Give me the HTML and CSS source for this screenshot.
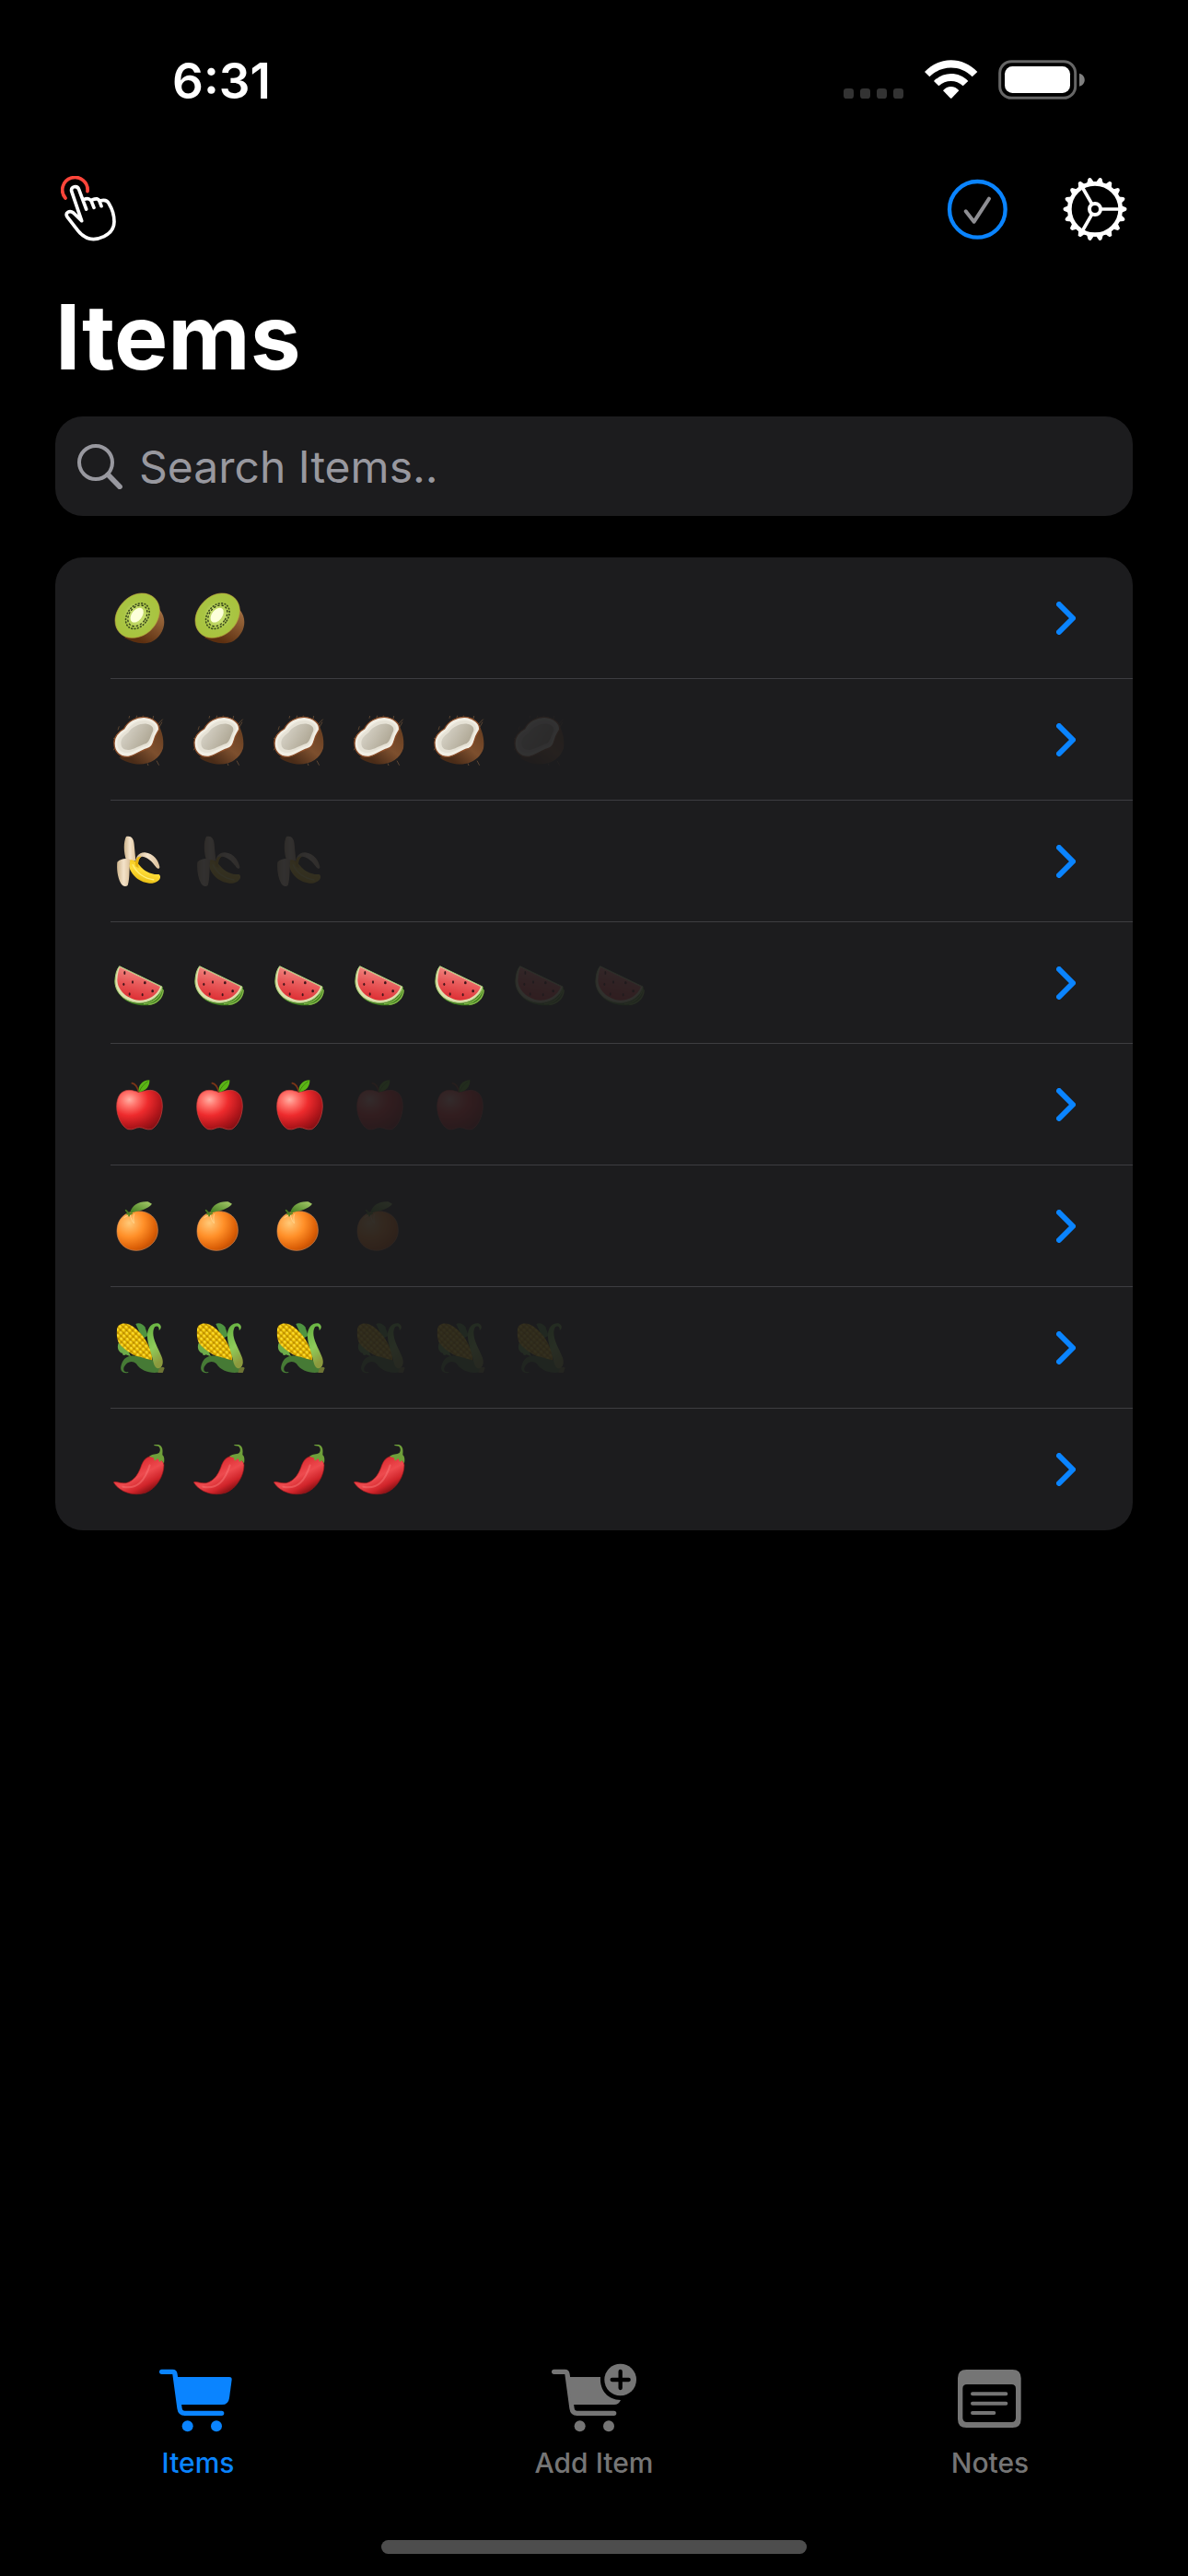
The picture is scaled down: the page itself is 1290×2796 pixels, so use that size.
FILE: index.html
```html
<!DOCTYPE html>
<html lang="en">
<head>
<meta charset="utf-8">
<meta name="viewport" content="width=device-width, initial-scale=1">
<title>Items</title>
<link rel="stylesheet" href="styles.css">
</head>
<body>
<svg class="sprite" aria-hidden="true">
  <defs>
    <linearGradient id="kiwi-skin" x1="1" y1="0" x2="0.5" y2="1"><stop offset="0" stop-color="#c08b58"/><stop offset="1" stop-color="#5c2f10"/></linearGradient>
    <radialGradient id="kiwi-flesh"><stop offset="0.3" stop-color="#c5dc6c"/><stop offset="0.6" stop-color="#a9c544"/><stop offset="1" stop-color="#a9c33e"/></radialGradient>
    <linearGradient id="coco-shell" x1="1" y1="0.3" x2="0.4" y2="1"><stop offset="0" stop-color="#6a4022"/><stop offset="0.5" stop-color="#7d4f2e"/><stop offset="1" stop-color="#4a2c18"/></linearGradient>
    <linearGradient id="coco-hollow" x1="0" y1="0.3" x2="1" y2="0.8"><stop offset="0" stop-color="#d8d4c9"/><stop offset="1" stop-color="#a8a08c"/></linearGradient>
    <linearGradient id="banana-fruit" x1="0.7" y1="0" x2="0.3" y2="1"><stop offset="0" stop-color="#f0bd10"/><stop offset="0.5" stop-color="#ffdc38"/><stop offset="1" stop-color="#e5b90b"/></linearGradient>
    <linearGradient id="banana-peel" x1="0" y1="0" x2="1" y2="0"><stop offset="0" stop-color="#cdb48c"/><stop offset="0.5" stop-color="#f4e3ca"/><stop offset="1" stop-color="#dbc09a"/></linearGradient>
    <linearGradient id="melon-flesh" x1="0.6" y1="0" x2="0.3" y2="1"><stop offset="0" stop-color="#f4968c"/><stop offset="0.5" stop-color="#e85a5a"/><stop offset="1" stop-color="#dc2b30"/></linearGradient>
    <radialGradient id="apple-skin" cx="0.28" cy="0.24" r="0.85"><stop offset="0" stop-color="#ffb0a4"/><stop offset="0.2" stop-color="#ff736b"/><stop offset="0.48" stop-color="#ee2b2d"/><stop offset="0.8" stop-color="#b3161b"/><stop offset="1" stop-color="#8a1015"/></radialGradient>
    <radialGradient id="orange-skin" cx="0.3" cy="0.3" r="0.8"><stop offset="0" stop-color="#ffc978"/><stop offset="0.45" stop-color="#ff8f28"/><stop offset="0.8" stop-color="#dd6108"/><stop offset="1" stop-color="#b84a02"/></radialGradient>
    <linearGradient id="leaf" x1="0" y1="1" x2="1" y2="0"><stop offset="0" stop-color="#3f7a1c"/><stop offset="1" stop-color="#a9cc6c"/></linearGradient>
    <linearGradient id="husk" x1="0" y1="0" x2="0.3" y2="1"><stop offset="0" stop-color="#5fae3c"/><stop offset="0.6" stop-color="#8fcc5a"/><stop offset="1" stop-color="#8c9a3e"/></linearGradient>
    <linearGradient id="chili-skin" x1="0.3" y1="0.2" x2="0.8" y2="0.9"><stop offset="0" stop-color="#d8262c"/><stop offset="0.45" stop-color="#ee4a4e"/><stop offset="0.75" stop-color="#d0242a"/><stop offset="1" stop-color="#7a0d10"/></linearGradient>
    <pattern id="kernels" width="15" height="13" patternUnits="userSpaceOnUse" patternTransform="rotate(44)"><rect width="15" height="13" fill="#b98a00"/><rect x="1" y="1" width="13" height="11" rx="5" fill="#f7ce0c"/><rect x="3" y="3" width="6" height="4" rx="2" fill="#ffe658"/></pattern>
  </defs>
  <symbol id="kiwi" viewBox="0 0 180 180">
    <path d="M100 9C138 8 156 38 160 62C190 98 172 150 132 168C100 178 72 168 45 154C90 120 100 60 100 9Z" fill="url(#kiwi-skin)"/>
    <path d="M101 9C135 8 160 32 160 65C160 105 125 154 69 154C38 154 15 130 15 98C15 55 58 9 101 9Z" fill="url(#kiwi-flesh)" stroke="#b59c3e" stroke-width="2"/>
    <ellipse cx="88" cy="83" rx="33" ry="46" transform="rotate(38 88 83)" fill="none" stroke="#3b4a1d" stroke-width="5" stroke-linecap="round" stroke-dasharray="2 8"/>
    <ellipse cx="88" cy="82" rx="27" ry="38" transform="rotate(38 88 82)" fill="none" stroke="#2f3a18" stroke-width="4" stroke-linecap="round" stroke-dasharray="4 9"/>
    <ellipse cx="86" cy="80" rx="17" ry="27" transform="rotate(38 86 80)" fill="#fdffda"/>
  </symbol>
  <symbol id="coconut" viewBox="0 0 180 180">
    <path d="M60 20L62 12M84 18L86 11M104 19L106 11M138 22L140 12M152 42L170 23M158 50L168 32M14 88L9 84M12 118L10 124M24 58L28 46M150 158L158 173M120 166L123 174" stroke="#7d5a3c" stroke-width="2"/>
    <path d="M145 28C165 48 176 86 171 118C160 156 118 176 76 168C55 164 40 158 28 147C70 140 120 80 145 28Z" fill="url(#coco-shell)"/>
    <path d="M12 102C10 82 26 63 44 54C56 30 84 15 110 16C138 18 160 36 158 56C154 66 147 72 143 88C137 108 133 116 118 120C98 126 76 142 58 145C30 147 12 128 12 102Z" fill="#f1eee4" stroke="#8b4d28" stroke-width="4"/>
    <path d="M22 102C20 86 36 70 52 60C68 36 96 24 116 28C140 32 150 44 146 58C136 76 134 98 122 108C98 114 76 130 58 132C36 134 22 122 22 102Z" fill="#e6e2d6"/>
    <path d="M34 100C34 84 48 74 58 66C72 46 98 36 118 38C136 42 142 52 138 62C130 78 128 94 116 102C96 108 76 122 58 123C42 123 34 116 34 100Z" fill="url(#coco-hollow)"/>
  </symbol>
  <symbol id="banana" viewBox="0 0 180 180">
    <path d="M51 9C66 5 76 14 77 34L82 88L52 88C42 60 42 26 51 9Z" fill="url(#banana-peel)"/>
    <path d="M64 84C76 84 84 90 94 102C110 122 132 134 158 132C168 140 160 158 136 161C96 162 66 134 60 104Z" fill="url(#banana-fruit)"/>
    <path d="M82 104C78 76 92 60 112 61C142 64 156 88 160 108C160 116 152 114 148 108C136 90 118 74 102 74C92 78 88 92 90 112Z" fill="url(#banana-peel)"/>
    <path d="M82 106C78 84 88 72 100 74C92 82 88 94 92 112Z" fill="#e8b40e"/>
    <path d="M22 92C32 82 50 78 64 84C60 108 64 142 56 168C50 173 40 172 34 162C22 140 20 112 22 92Z" fill="url(#banana-peel)"/>
    <path d="M72 100C86 130 112 146 142 150" fill="none" stroke="#fff07a" stroke-width="4"/>
  </symbol>
  <symbol id="watermelon" viewBox="0 0 180 180">
    <path d="M29 35L170 103C176 128 160 156 128 162C60 170 14 130 13 84C14 62 20 46 29 35Z" fill="#3f7d1f"/>
    <path d="M168 108C164 134 140 156 108 158M172 112C170 140 150 158 124 160" fill="none" stroke="#86b94a" stroke-width="4"/>
    <path d="M29 35L168 102C160 134 128 154 96 154C48 154 15 122 15 84C16 62 20 46 29 35Z" fill="#dedfae" stroke="#a9c77a" stroke-width="3"/>
    <path d="M30 38L162 102C150 132 122 147 93 146C54 142 23 114 22 80C23 62 26 48 30 38Z" fill="url(#melon-flesh)"/>
    <g fill="#43141a"><ellipse cx="46" cy="57" rx="3" ry="6"/><ellipse cx="72" cy="87" rx="3" ry="5"/><ellipse cx="43" cy="94" rx="3" ry="5"/><ellipse cx="112" cy="89" rx="4" ry="5"/><ellipse cx="137" cy="116" rx="4" ry="5"/><ellipse cx="62" cy="126" rx="3" ry="5"/><ellipse cx="104" cy="128" rx="3" ry="5"/></g>
  </symbol>
  <symbol id="apple" viewBox="0 0 180 180">
    <path d="M20 96C20 62 36 43 60 43C76 43 84 49 94 49C104 49 114 43 130 43C156 44 169 64 169 96C168 130 152 160 134 170C116 174 108 164 94 164C80 164 74 174 56 170C36 160 20 128 20 96Z" fill="url(#apple-skin)" stroke="#c9433f" stroke-width="2"/>
    <path d="M70 20C80 22 88 34 91 48" fill="none" stroke="#7c3518" stroke-width="5" stroke-linecap="round"/>
    <path d="M92 49C88 28 104 10 127 10C128 30 116 46 92 49Z" fill="#5cb416"/>
    <path d="M94 47C100 32 110 22 122 14" fill="none" stroke="#3d8a0c" stroke-width="3"/>
  </symbol>
  <symbol id="tangerine" viewBox="0 0 180 180">
    <path d="M21 106C21 66 48 40 88 41C128 40 154 64 154 102C155 132 134 156 104 166C92 170 76 170 64 166C38 158 21 136 21 106Z" fill="url(#orange-skin)" stroke="#d98b52" stroke-width="2"/>
    <path d="M44 62C54 56 60 54 64 52C66 66 72 76 76 80C74 64 74 56 78 50" fill="none" stroke="#ffd58c" stroke-width="3"/>
    <path d="M64 44C72 20 92 8 122 10L135 17C122 34 100 38 66 46Z" fill="url(#leaf)"/>
    <path d="M50 38C56 46 60 48 66 50M54 50L70 48M60 56L63 48" fill="none" stroke="#4d8322" stroke-width="5" stroke-linecap="round"/>
  </symbol>
  <symbol id="corn" viewBox="0 0 180 180">
    <path d="M82 12C92 6 106 12 112 22L122 50L104 60Z" fill="#4f9440"/>
    <path d="M26 74C20 90 26 104 40 108C36 112 44 116 50 112L66 118L44 70Z" fill="#6dab4a"/>
    <path d="M21 30C22 12 42 6 62 14C92 28 118 62 134 106L136 132C100 130 48 104 26 72C20 58 20 44 21 30Z" fill="url(#kernels)"/>
    <path d="M58 170C44 176 30 166 34 150C38 128 54 112 78 116C104 118 128 132 154 132L172 166C140 178 100 168 84 142C70 128 52 136 44 152C40 164 46 170 58 168Z" fill="#467a35"/>
    <path d="M120 44C122 22 136 8 154 10C166 14 168 26 158 33C160 22 152 16 144 22C128 50 154 86 168 122C174 140 168 156 154 157C142 152 140 138 136 122C130 96 118 70 120 44Z" fill="url(#husk)"/>
    <path d="M158 158C166 152 172 150 176 156L170 171H154Z" fill="#6d7434"/>
  </symbol>
  <symbol id="chili" viewBox="0 0 180 180">
    <path d="M10 132C14 126 30 136 50 134C76 128 88 108 98 84C106 60 116 48 136 46C156 46 172 58 174 76C174 110 150 152 114 166C74 178 30 164 10 132Z" fill="url(#chili-skin)" stroke="#a2181c" stroke-width="2"/>
    <path d="M40 146C90 156 112 124 128 76" fill="none" stroke="#ff8583" stroke-width="6" stroke-linecap="round" opacity="0.4"/>
    <path d="M126 48C136 38 150 42 158 36C164 28 162 20 156 14L142 12V9H156C172 14 170 30 169 42C176 48 176 58 174 70L166 60L160 66L154 54L144 62L140 52Z" fill="#6fa03a"/>
  </symbol>
  <symbol id="chevron" viewBox="0 0 21 36"><path d="M3 3L18 18L3 33" fill="none" stroke="#0a84ff" stroke-width="6" stroke-linecap="round" stroke-linejoin="round"/></symbol>
</svg>

<div class="status-bar">
  <time class="clock">6:31</time>
  <div class="indicators" aria-hidden="true">
    <svg width="66" height="44" viewBox="108 72 198 132" fill="#333"><rect x="108" y="168" width="33" height="33" rx="10"/><rect x="162" y="168" width="33" height="33" rx="10"/><rect x="216" y="168" width="33" height="33" rx="10"/><rect x="270" y="168" width="33" height="33" rx="10"/></svg>
    <svg width="58" height="44" viewBox="372 72 174 132" fill="#fff"><path d="M372 114C420 63 496 63 544 114L527 130C489 91 427 91 388 130Z"/><path d="M402 144C433 112 483 112 514 144L497 160C475 139 441 139 418 160Z"/><path d="M432 175C446 158 470 158 484 175L461 199Q458 202 455 199Z"/></svg>
    <svg width="94" height="44" viewBox="612 72 282 132"><rect x="617" y="80" width="246" height="119" rx="38" fill="none" stroke="#666" stroke-width="9"/><rect x="633" y="96" width="213" height="87" rx="25" fill="#fff"/><path d="M876 119C899 125 899 155 876 161Z" fill="#808080"/></svg>
  </div>
</div>

<header class="toolbar">
  <button class="icon-button" type="button" aria-label="Gestures">
    <svg width="61" height="72" viewBox="198 453 183 216" fill="none" stroke-linecap="round" stroke-linejoin="round"><path d="M213 525A41 41 0 1 1 285 503" stroke="#ff453a" stroke-width="11"/><path d="M281 561L257 497C252 483 230 486 233 502L266 599L239 573C227 563 211 573 219 586L254 631C284 669 316 661 339 650C362 638 372 622 372 602C372 582 364 558 356 545C350 532 338 530 326 534M272 530C287 524 295 528 298 536L306 556M300 531C314 525 321 527 324 535L330 551" stroke="#fff" stroke-width="11"/></svg>
  </button>
  <div class="toolbar-actions">
    <button class="icon-button" type="button" aria-label="Completed">
      <svg width="66" height="66" viewBox="444 462 198 198" fill="none"><circle cx="544" cy="562" r="91" stroke="#0a84ff" stroke-width="13"/><path d="M506 568L533 602L582 527" stroke="#8e8e93" stroke-width="12" stroke-linecap="round" stroke-linejoin="round"/></svg>
    </button>
    <button class="icon-button" type="button" aria-label="Settings">
      <svg width="70" height="70" viewBox="-105 -105 210 210" fill="#fff">
        <circle r="83" fill="none" stroke="#fff" stroke-width="14"/><circle r="18" fill="none" stroke="#fff" stroke-width="12"/>
        <path d="M20 0H80M-10 -17L-40 -69M-10 17L-40 69" stroke="#fff" stroke-width="11"/>
        <g id="teeth-third"><path id="cog" d="M86 -12L101 -5Q106 0 101 5L86 12Z"/><use href="#cog" transform="rotate(20)"/><use href="#cog" transform="rotate(40)"/><use href="#cog" transform="rotate(60)"/><use href="#cog" transform="rotate(80)"/><use href="#cog" transform="rotate(100)"/></g><use href="#teeth-third" transform="rotate(120)"/><use href="#teeth-third" transform="rotate(240)"/>
      </svg>
    </button>
  </div>
</header>

<main class="content">
  <h1 class="title">Items</h1>
  <label class="search">
    <svg width="49" height="49" viewBox="132 153 147 147" fill="none" stroke="#98989f" role="img" aria-label="Search"><circle cx="192" cy="213" r="54" stroke-width="12"/><path d="M232 253L270 292" stroke-width="17" stroke-linecap="round"/></svg>
    <input class="search-input" type="search" placeholder="Search Items..">
  </label>
  <ul class="list" id="list"></ul>
</main>

<nav class="tab-bar">
  <a class="tab tab-active" href="#items" aria-current="page">
    <svg width="96" height="76" viewBox="201 105 288 228" fill="currentColor"><path d="M227 133H262Q269 133 270 141L285 252Q287 268 302 268H422" fill="none" stroke="currentColor" stroke-width="16" stroke-linecap="round" stroke-linejoin="round"/><path d="M272 150H447Q456 150 455 159L447 218Q444 240 423 240H284Z"/><circle cx="311" cy="310" r="18"/><circle cx="405" cy="310" r="18"/></svg>
    <span>Items</span>
  </a>
  <a class="tab" href="#add">
    <svg width="96" height="76" viewBox="171 105 288 228" fill="currentColor"><path d="M185 133H220Q227 133 228 141L243 252Q245 268 260 268H380" fill="none" stroke="currentColor" stroke-width="16" stroke-linecap="round" stroke-linejoin="round"/><path d="M230 150H336C333 194 360 224 402 225Q396 240 381 240H242Z"/><circle cx="269" cy="310" r="18"/><circle cx="363" cy="310" r="18"/><circle cx="401" cy="159" r="52"/><path d="M401 132V186M374 159H428" stroke="#000" stroke-width="13" stroke-linecap="round"/></svg>
    <span>Add Item</span>
  </a>
  <a class="tab" href="#notes">
    <svg width="96" height="76" viewBox="141 105 288 228" fill="currentColor"><path fill-rule="evenodd" d="M208 126H358Q386 126 386 154V287Q386 315 358 315H208Q180 315 180 287V154Q180 126 208 126ZM210 174Q196 174 196 188V283Q196 297 210 297H355Q369 297 369 283V188Q369 174 355 174Z"/><path d="M228 205H337M228 236H337M228 267H298" stroke="currentColor" stroke-width="12" stroke-linecap="round"/></svg>
    <span>Notes</span>
  </a>
</nav>
<div class="home-indicator"></div>
<script src="script.js"></script>
</body>
</html>
```
FILE: styles.css
```css
* { box-sizing: border-box; }

body {
  margin: 0;
  min-height: 100vh;
  display: flex;
  flex-direction: column;
  background: #000;
  color: #fff;
  font-family: Inter, "Liberation Sans", sans-serif;
}

svg { display: block; flex: none; }

.sprite { position: absolute; width: 0; height: 0; }

.status-bar {
  display: flex;
  align-items: center;
  justify-content: space-between;
  height: 172px;
  padding: 0 112px 0 187px;
}

.clock { padding-top: 4px; font-size: 53px; font-weight: 600; line-height: 64px; }

.indicators { display: flex; gap: 22px; }

.toolbar {
  display: flex;
  align-items: center;
  justify-content: space-between;
  height: 110px;
  padding: 0 66px;
}

.toolbar-actions { display: flex; align-items: center; gap: 60px; }

.icon-button { padding: 0; border: 0; background: none; }

.content { flex: 1; padding: 0 60px; }

.title {
  margin: 24px 0 26px;
  font-size: 98px;
  font-weight: 700;
  line-height: 120px;
}

.search {
  display: flex;
  align-items: center;
  gap: 18px;
  height: 108px;
  padding: 0 24px;
  border-radius: 30px;
  background: #1c1c1e;
}

.search-input {
  flex: 1;
  min-width: 0;
  padding: 2px 0 0;
  border: 0;
  outline: 0;
  background: none;
  color: #fff;
  font: 400 48px/64px Inter, "Liberation Sans", sans-serif;
}

.search-input::placeholder { color: #98989f; opacity: 1; }

.list {
  margin: 45px 0 0;
  padding: 0;
  overflow: hidden;
  border-radius: 30px;
  background: #1c1c1e;
  list-style: none;
}

.row {
  display: flex;
  align-items: center;
  justify-content: space-between;
  height: 132px;
  margin-left: 60px;
  padding-right: 62px;
  border-bottom: 1px solid #3d3d41;
}

.list li:last-child .row { border-bottom-color: transparent; }

.units { display: flex; gap: 27px; }

.unit { width: 60px; height: 60px; }

.unit-used { opacity: 0.1; }

.tab-bar { display: grid; grid-template-columns: repeat(3, 1fr); padding-bottom: 60px; }

.tab {
  display: flex;
  flex-direction: column;
  align-items: center;
  gap: 14px;
  color: #757575;
  font-size: 30px;
  font-weight: 500;
  line-height: 36px;
  text-decoration: none;
}

.tab-active { color: #0a84ff; }

.home-indicator {
  align-self: center;
  width: 462px;
  height: 15px;
  margin: 6px 0 24px;
  border-radius: 8px;
  background: #4d4d4d;
}
```
FILE: script.js
```js
const items = [
  { icon: 'kiwi', left: 2, total: 2 },
  { icon: 'coconut', left: 5, total: 6 },
  { icon: 'banana', left: 1, total: 3 },
  { icon: 'watermelon', left: 5, total: 7 },
  { icon: 'apple', left: 3, total: 5 },
  { icon: 'tangerine', left: 3, total: 4 },
  { icon: 'corn', left: 3, total: 6 },
  { icon: 'chili', left: 4, total: 4 },
];

document.getElementById('list').innerHTML = items.map(({ icon, left, total }) => {
  const units = Array.from({ length: total }, (_, i) =>
    `<svg class="unit${i < left ? '' : ' unit-used'}"><use href="#${icon}"/></svg>`).join('');
  return `<li><a class="row" href="#${icon}" aria-label="${icon}, ${left} of ${total}">
    <span class="units">${units}</span>
    <svg width="21" height="36"><use href="#chevron"/></svg>
  </a></li>`;
}).join('');
```
